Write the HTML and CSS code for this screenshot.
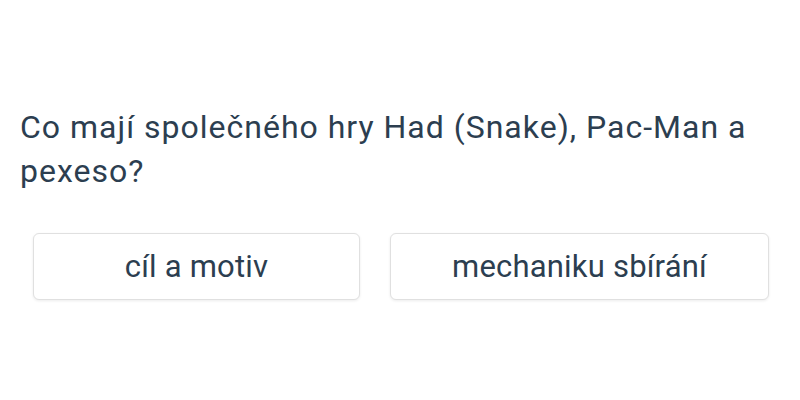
FILE: index.html
```html
<!DOCTYPE html>
<html lang="cs">
<head>
<meta charset="utf-8">
<link rel="stylesheet" href="styles.css">
</head>
<body>
<main class="quiz">
  <h1 class="question">Co mají společného hry Had (Snake), Pac-Man a pexeso?</h1>
  <div class="options">
    <button class="option">cíl a motiv</button>
    <button class="option">mechaniku sbírání</button>
  </div>
</main>
</body>
</html>
```
FILE: styles.css
```css
html, body {
  margin: 0;
  padding: 0;
  background: #ffffff;
}
body {
  font-family: Roboto, "Liberation Sans", sans-serif;
  color: #2c3e50;
  width: 800px;
  height: 400px;
  overflow: hidden;
}
.quiz {
  padding: 105px 20px 0 20px;
}
.question {
  margin: 0;
  font-size: 32px;
  font-weight: 400;
  line-height: 44px;
  letter-spacing: 1px;
}
.options {
  display: grid;
  grid-template-columns: 327fr 379fr;
  column-gap: 30px;
  margin: 40px 11px 0 13px;
}
.option {
  height: 67px;
  background: #ffffff;
  border: 1px solid #e0e0e0;
  border-radius: 6px;
  box-shadow: 0 1px 3px rgba(0, 0, 0, 0.08);
  font-family: Roboto, "Liberation Sans", sans-serif;
  font-size: 31px;
  letter-spacing: 0.2px;
  color: #2c3e50;
  padding: 0 12px;
}
```
